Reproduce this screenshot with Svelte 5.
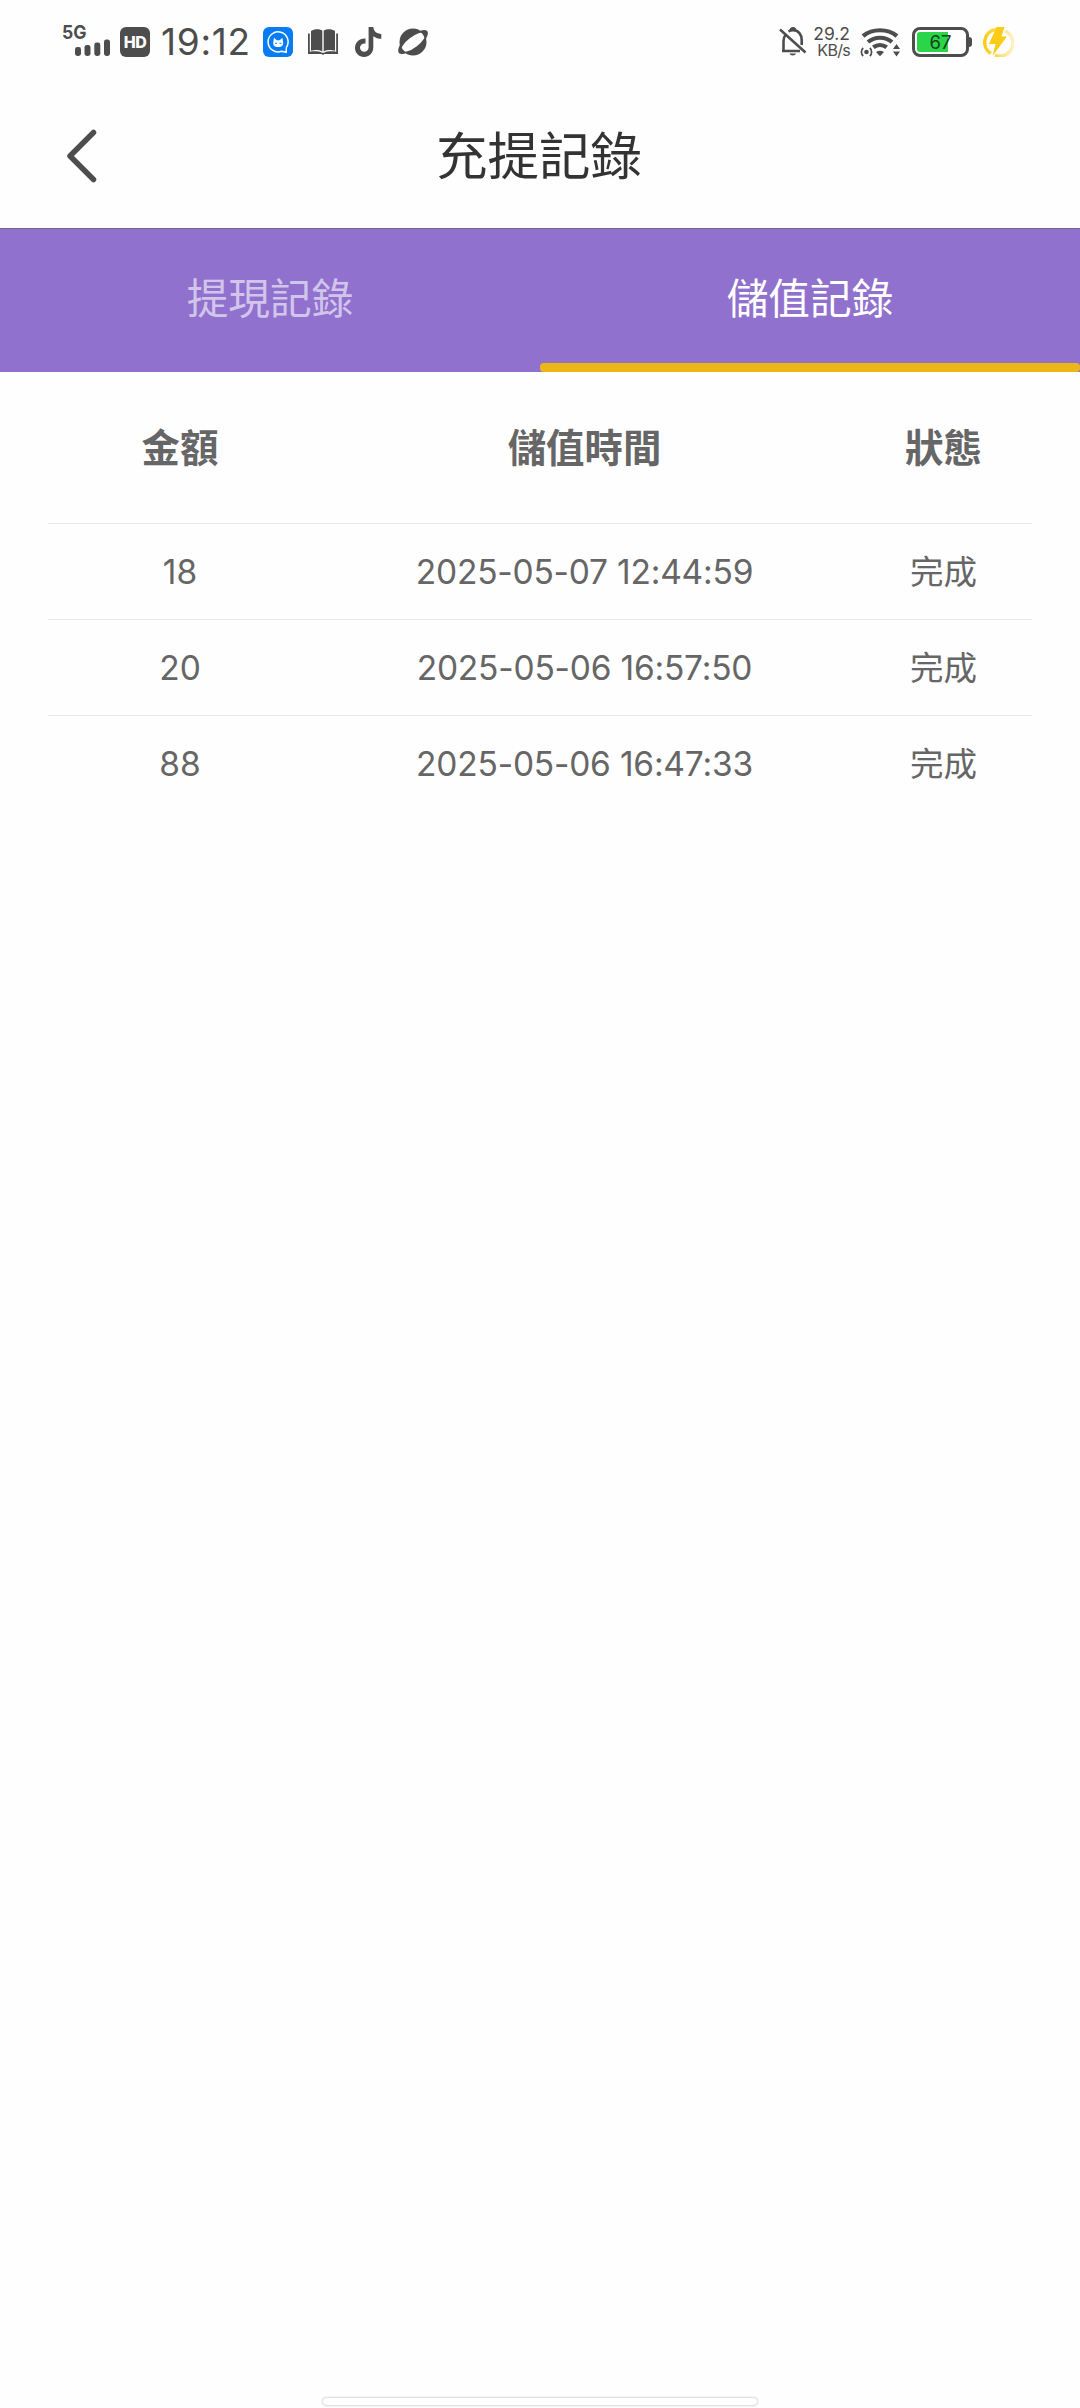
<script lang="ts">
    type RecordRow = { amount: number; time: string; status: string };

    const tabs = ["提現記錄", "儲值記錄"];
    let activeTab = $state(1);

    const records: RecordRow[] = [
        { amount: 18, time: "2025-05-07 12:44:59", status: "完成" },
        { amount: 20, time: "2025-05-06 16:57:50", status: "完成" },
        { amount: 88, time: "2025-05-06 16:47:33", status: "完成" }
    ];
</script>

<div class="screen">
    <div class="status-bar">
        <div class="status-left">
            <svg class="signal" width="52" height="60" viewBox="58 12 52 60">
                <text x="62" y="39" textLength="24.5" lengthAdjust="spacingAndGlyphs">5G</text>
                <rect x="75" y="47" width="6" height="9" rx="2.4" />
                <rect x="84.5" y="45" width="6" height="11" rx="2.4" />
                <rect x="94.3" y="42.5" width="6" height="13.5" rx="2.4" />
                <rect x="104" y="39.5" width="6" height="16.5" rx="2.4" />
            </svg>
            <span class="hd">HD</span>
            <span class="clock">19:12</span>
            <svg class="chat" width="30" height="30" viewBox="0 0 30 30">
                <rect width="30" height="30" rx="6" fill="#087cf5" />
                <path d="M23.300 20.600A10 10 0 1 0 18.500 24.300l4.700 1z" fill="none" stroke="#fff" stroke-width="1.500" stroke-linejoin="round" />
                <path d="M11 10.800l2.700 2.400h3l2.700-2.400.6 4c.7 3.600-1 5.200-4.800 5.200s-5.500-1.600-4.800-5.200z" fill="#fff" />
                <path d="M12 16.300h2M16.400 16.300h2" stroke="#087cf5" stroke-width="1.100" />
            </svg>
            <svg class="book" width="30" height="26" viewBox="0 0 30 26">
                <path d="M0 4.500h1.800v18.200c4.500-.7 9-.7 12.200 1.100h2c3.200-1.800 7.700-1.800 12.200-1.100V4.500H30V25H16.500l-1.500 1-1.500-1H0z" />
                <path d="M3 2C6.500-.3 11-.3 14.300 1.600V22.500C11 20.600 6.500 20.600 3 21.700zM15.700 1.600C19-.3 23.500-.3 27 2v19.700c-3.500-1.100-8-1.100-11.300.8z" />
            </svg>
            <svg class="note" width="27" height="30" viewBox="0 0 27 30">
                <path d="M13.600 0h4.700c.4 4 3.200 6.700 8 7v4.800c-3 0-5.700-1-8-2.600V20.500C18.300 26 14 30 9 30S0 26 0 20.800c0-5.500 4.500-9.700 10.500-9.300v5c-3.100-.5-5.500 1.500-5.500 4.100 0 2.500 1.900 4.200 4.200 4.200 2.500 0 4.400-1.800 4.400-4.600z" />
            </svg>
            <svg class="planet" width="31" height="28" viewBox="0 0 31 28">
                <circle cx="15" cy="14" r="13.500" />
                <ellipse cx="15.300" cy="14.200" rx="14.500" ry="5.300" transform="rotate(-37 15.300 14.200)" fill="#fefefe" />
                <path d="M21.500 3.200C26 1.200 30 1.600 29.900 5c0 2-1 4.500-2.800 7-.6-3.600-2.500-6.800-5.600-8.800zM2.400 16.500C-.4 20.500-.3 24.500 1.500 25.600c1.700.9 4.600.4 7.400-.8-3.500-1.800-5.700-4.700-6.500-8.300z" />
            </svg>
        </div>
        <div class="status-right">
            <svg class="bell" width="28" height="30" viewBox="0 0 28 30">
                <path d="M4.500 24V14c0-2.400.7-4.500 2-6M9.500 4.400C11 3.600 12.400 3.300 14 3.300c5.500 0 8.700 4.400 8.700 9.700v5M3 24h18" fill="none" stroke="#4d4d4d" stroke-width="2.600" />
                <path d="M1 2.500L26.500 25.500" stroke="#4d4d4d" stroke-width="2.500" />
                <path d="M10.500 3.500a3.500 3.500 0 0 1 7 0zM10.500 26.500h6.500a3.300 2.500 0 0 1-6.500 0z" />
            </svg>
            <div class="net-speed">
                <span>29.2</span>
                <span>KB/s</span>
            </div>
            <svg class="wifi" width="41" height="30" viewBox="0 0 41 30">
                <g fill="none" stroke="#4d4d4d" stroke-width="4.200">
                    <path d="M3 9C12.500 1.300 27.500 1.300 37 9" />
                    <path d="M8 15C14.800 9.300 25.200 9.300 32 15" />
                    <path d="M13.300 20.300C17.400 17.200 22.600 17.200 26.700 20.300" />
                </g>
                <path d="M16 25c2.400-1.600 5.600-1.600 8 0l-4 4.300z" />
                <circle cx="6.500" cy="25" r="2.300" />
                <path d="M3.200 21c-2.400 2-2.400 6 0 8M9.800 21c2.400 2 2.400 6 0 8" fill="none" stroke="#4d4d4d" stroke-width="1.700" />
                <path d="M36.500 17l3.500 5h-7zM36.500 29.500l-3.500-5h7z" />
            </svg>
            <div class="battery">
                <div class="battery-level"></div>
                <span class="battery-text">67</span>
            </div>
            <svg class="charge" width="32" height="30" viewBox="0 0 32 30">
                <defs>
                    <linearGradient id="ring" x1="0" y1="0" x2="1" y2="0">
                        <stop offset="0" stop-color="#fccb16" />
                        <stop offset="1" stop-color="#fccb16" stop-opacity="0.25" />
                    </linearGradient>
                </defs>
                <path d="M14 2.500A13 13 0 0 0 9 26.500M23 4A13 13 0 0 1 13 28" fill="none" stroke="url(#ring)" stroke-width="3.500" />
                <path d="M14.500 0h8l-3 9.500H25L10.500 29l3-12H7z" fill="#fccb16" />
            </svg>
        </div>
    </div>

    <header class="nav-bar">
        <button class="back" aria-label="返回">
            <svg width="32" height="56" viewBox="0 0 32 56">
                <path d="M27.500 4.500L4 28l23.500 23.500" />
            </svg>
        </button>
        <h1>充提記錄</h1>
    </header>

    <div class="tabs" role="tablist">
        {#each tabs as tab, i}
            <button
                class="tab"
                class:active={i === activeTab}
                role="tab"
                aria-selected={i === activeTab}
                onclick={() => (activeTab = i)}
            ><span>{tab}</span></button>
        {/each}
    </div>

    <main class="records">
        <div class="row head">
            <span>金額</span>
            <span>儲值時間</span>
            <span>狀態</span>
        </div>
        {#each records as record}
            <div class="row">
                <span>{record.amount}</span>
                <span class="time">{record.time}</span>
                <span>{record.status}</span>
            </div>
        {/each}
    </main>

    <div class="home-indicator"></div>
</div>

<style>
    :global(body) {
        margin: 0;
        background: #fefefe;
    }

    .screen {
        width: 1080px;
        height: 2408px;
        display: flex;
        flex-direction: column;
        overflow: hidden;
        background: #fefefe;
        font-family: Inter, "Noto Sans CJK TC", sans-serif;
        color: #666;
    }

    button {
        padding: 0;
        border: 0;
        background: none;
        font: inherit;
        color: inherit;
    }

    svg {
        display: block;
        flex: none;
        fill: #4d4d4d;
    }

    .status-bar {
        height: 84px;
        padding: 0 66px 0 58px;
        box-sizing: border-box;
        display: flex;
        justify-content: space-between;
        color: #4d4d4d;
    }

    .status-left,
    .status-right {
        display: flex;
        align-items: center;
        height: 84px;
    }

    .signal text {
        font-size: 19px;
        font-weight: 700;
    }

    .hd {
        width: 30px;
        height: 30px;
        margin-left: 10px;
        border-radius: 6px;
        background: #4d4d4d;
        color: #fff;
        font-size: 16px;
        font-weight: 800;
        line-height: 30px;
        text-align: center;
        letter-spacing: -0.5px;
    }

    .clock {
        width: 90px;
        margin-left: 11px;
        font-size: 37px;
        line-height: 84px;
        letter-spacing: 0.7px;
        white-space: nowrap;
    }

    .chat {
        margin-left: 12px;
    }

    .book {
        margin-left: 15px;
    }

    .note {
        margin-left: 17px;
    }

    .planet {
        margin-left: 16px;
    }

    .net-speed {
        width: 38px;
        margin-right: 10px;
        margin-left: 5px;
        display: flex;
        flex-direction: column;
        align-items: flex-end;
        font-size: 17.5px;
        line-height: 17px;
        white-space: nowrap;
    }

    .net-speed span:last-child {
        font-size: 16px;
        letter-spacing: -0.7px;
    }

    .battery {
        position: relative;
        width: 57px;
        height: 30px;
        margin-left: 11px;
        padding: 2px;
        box-sizing: border-box;
        border: 3px solid #4d4d4d;
        border-radius: 8px;
        display: flex;
    }

    .battery::after {
        content: "";
        position: absolute;
        right: -6px;
        top: 7px;
        width: 3px;
        height: 10px;
        border-radius: 0 3px 3px 0;
        background: #4d4d4d;
    }

    .battery-level {
        width: 67%;
        border-radius: 3px 0 0 3px;
        background: #2bd549;
    }

    .battery-text {
        position: absolute;
        inset: 0;
        color: #16401c;
        font-size: 18.5px;
        line-height: 25px;
        text-align: center;
    }

    .charge {
        margin-left: 13px;
    }

    .nav-bar {
        height: 145px;
        box-sizing: border-box;
        border-bottom: 1px solid #75649c;
        display: grid;
        grid-template-columns: 158px 1fr 160px;
    }

    .back {
        height: 56px;
        margin-top: 44px;
        padding-left: 66px;
    }

    .back path {
        fill: none;
        stroke: #4d4d4d;
        stroke-width: 5.5;
        stroke-linecap: round;
        stroke-linejoin: round;
    }

    h1 {
        margin: 0;
        color: #333;
        font-size: 51.5px;
        font-weight: 400;
        line-height: 145px;
        text-align: center;
    }

    .tabs {
        display: flex;
        height: 143px;
        background: #9171ce;
    }

    .tab {
        flex: 1;
        display: flex;
        flex-direction: column;
        color: rgba(255, 255, 255, 0.6);
        font-size: 41.7px;
        align-items: center;
    }

    .tab span {
        height: 134px;
        line-height: 140px;
    }

    .tab.active {
        color: #fff;
    }

    .tab.active::after {
        content: "";
        width: 100%;
        height: 9px;
        border-radius: 4px;
        background: #edb617;
    }

    .records {
        flex: 1;
        padding: 0 48px;
    }

    .row {
        height: 96px;
        box-sizing: border-box;
        border-top: 1px solid #e8e8e8;
        display: grid;
        grid-template-columns: 264px 545px 173px;
        font-size: 33.5px;
        line-height: 97px;
        text-align: center;
        white-space: nowrap;
    }

    .head {
        height: 151px;
        border-top: 0;
        font-size: 38.4px;
        font-weight: 700;
        line-height: 153px;
    }

    .time {
        letter-spacing: -0.2px;
    }

    .home-indicator {
        width: 434px;
        height: 7px;
        margin: 0 auto 2px;
        border: 1px solid #e2e2e2;
        border-radius: 5px;
        background: #fff;
        box-shadow: 0 0 2px #ddd;
    }
</style>
